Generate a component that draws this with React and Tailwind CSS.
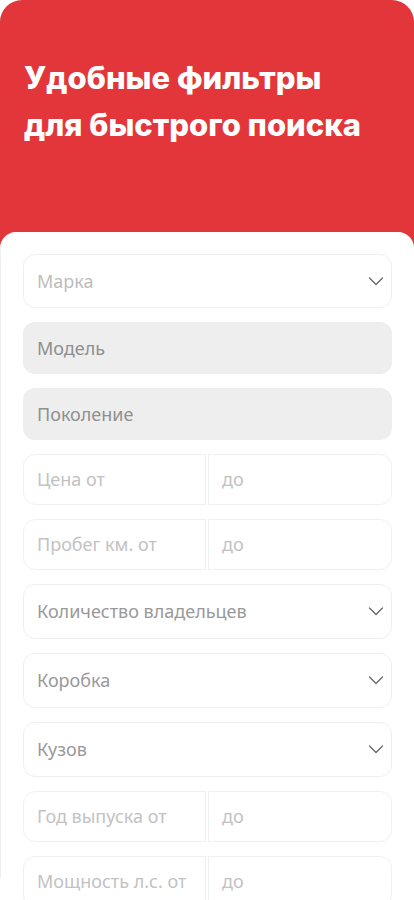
import React from 'react';

const Chevron = () => (
  <svg width="16" height="9" viewBox="0 0 16 9" fill="none" className="shrink-0">
    <path d="M1.5 1l6.5 6.5 6.5-6.5" stroke="#666666" strokeWidth="1.3" strokeLinecap="round" strokeLinejoin="round" />
  </svg>
);

const SelectField = ({ label, tall, light }) => (
  <div className={`flex items-center justify-between ${tall ? 'h-[55px]' : 'h-[54px]'} rounded-[12px] border border-[#efefef] bg-white pl-[13px] pr-[7px]`}>
    <span className={`text-[18px] ${light ? 'text-[#bdbdbd]' : 'text-[#999999]'}`}>{label}</span>
    <Chevron />
  </div>
);

const GrayField = ({ label }) => (
  <div className="flex items-center h-[52px] rounded-[12px] bg-[#eeeeee] px-[14px]">
    <span className="text-[18px] text-[#8f8f8f]">{label}</span>
  </div>
);

const RangeField = ({ label }) => (
  <div className="flex h-[51px] gap-[2px]">
    <div className="flex items-center w-[183px] rounded-l-[12px] border border-[#f0f0f0] px-[13px]">
      <span className="text-[18px] text-[#c2c2c2] whitespace-nowrap">{label}</span>
    </div>
    <div className="flex items-center flex-1 rounded-r-[12px] border border-[#f0f0f0] px-[13px]">
      <span className="text-[18px] text-[#c2c2c2]">до</span>
    </div>
  </div>
);

export default function App() {
  return (
    <div className="w-[414px] h-[900px] overflow-hidden bg-white" style={{ fontFamily: '"Noto Sans", "Open Sans", sans-serif' }}>
      <div className="h-[260px] rounded-t-[22px] bg-[#e2363a] px-6 pt-[54px]">
        <h1 className="text-[31px] leading-[47px] font-extrabold text-white" style={{ fontFamily: 'Inter, "Liberation Sans", sans-serif' }}>
          Удобные фильтры
          <br />
          для быстрого поиска
        </h1>
      </div>
      <div className="-mt-[28px] h-[646px] rounded-t-[16px] border-l border-[#efefef] bg-white px-[22px] pt-[22px]">
        <div className="flex flex-col gap-[14px]">
          <SelectField label="Марка" light />
          <GrayField label="Модель" />
          <GrayField label="Поколение" />
          <RangeField label="Цена от" />
          <RangeField label="Пробег км. от" />
          <SelectField label="Количество владельцев" tall />
          <SelectField label="Коробка" tall />
          <SelectField label="Кузов" tall />
          <RangeField label="Год выпуска от" />
          <RangeField label="Мощность л.с. от" />
        </div>
      </div>
    </div>
  );
}
